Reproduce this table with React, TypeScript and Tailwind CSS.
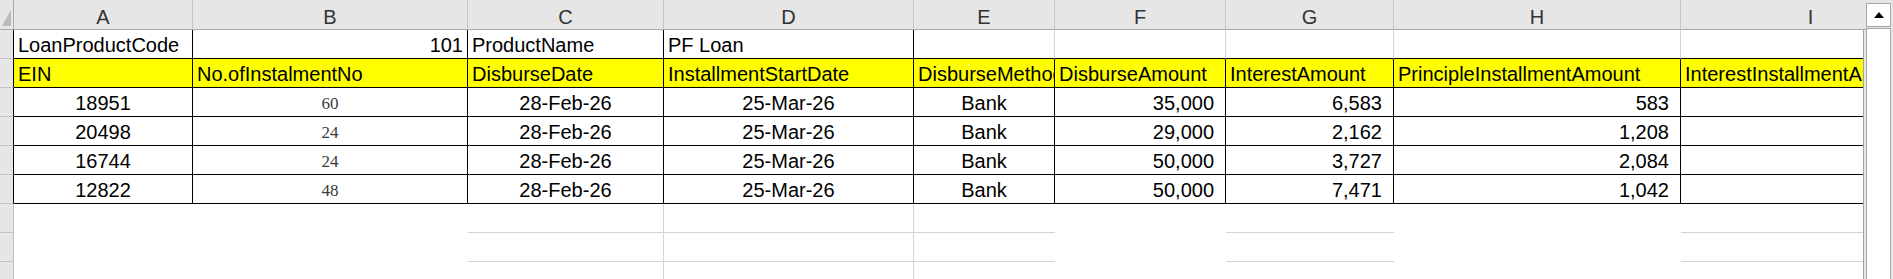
import React from "react";

type Align = "left" | "right" | "center";

interface CellDef {
  text?: string;
  align?: Align;
  serif?: boolean;
  pad?: "tight" | "num";
}

// column widths include the right border pixel
const widths = [
  "w-[179px]",
  "w-[275px]",
  "w-[196px]",
  "w-[250px]",
  "w-[141px]",
  "w-[171px]",
  "w-[168px]",
  "w-[287px]",
  "w-[260px]",
];

const letters = ["A", "B", "C", "D", "E", "F", "G", "H", "I"];

const headerRow: CellDef[] = [
  { text: "EIN" },
  { text: "No.ofInstalmentNo" },
  { text: "DisburseDate" },
  { text: "InstallmentStartDate" },
  { text: "DisburseMethod" },
  { text: "DisburseAmount" },
  { text: "InterestAmount" },
  { text: "PrincipleInstallmentAmount" },
  { text: "InterestInstallmentAmount" },
];

const loans = [
  ["18951", "60", "35,000", "6,583", "583"],
  ["20498", "24", "29,000", "2,162", "1,208"],
  ["16744", "24", "50,000", "3,727", "2,084"],
  ["12822", "48", "50,000", "7,471", "1,042"],
];

const dataRows: CellDef[][] = loans.map(([ein, n, amt, interest, principle]) => [
  { text: ein, align: "center" },
  { text: n, align: "center", serif: true },
  { text: "28-Feb-26", align: "center" },
  { text: "25-Mar-26", align: "center" },
  { text: "Bank", align: "center" },
  { text: amt, align: "right", pad: "num" },
  { text: interest, align: "right", pad: "num" },
  { text: principle, align: "right", pad: "num" },
  {},
]);

const alignClass: Record<Align, string> = {
  left: "justify-start",
  right: "justify-end",
  center: "justify-center",
};

function Cell({ w, border, def, bg = "" }: { w: string; border: string; def: CellDef; bg?: string }) {
  const align = def.align ?? "left";
  const pad = def.pad === "num" ? "pr-[11px] pl-[4px]" : "px-[4px]";
  return (
    <div className={`${w} ${border} ${bg} shrink-0 h-full flex items-end pb-[1px] overflow-hidden whitespace-nowrap ${alignClass[align]} ${pad}`}>
      {def.text && (
        <span
          className={
            def.serif
              ? "font-['Liberation_Serif',serif] text-[17px] leading-[23px] text-[#3a3a3a]"
              : "text-[20px] leading-[23px] text-black"
          }
        >
          {def.text}
        </span>
      )}
    </div>
  );
}

function RowHead({ edge }: { edge: "black" | "grid" }) {
  return (
    <div
      className={
        edge === "black"
          ? "w-[14px] shrink-0 h-full bg-[#e6e6e6] border-r border-b border-r-black border-b-[#c4c4c4]"
          : "w-[14px] shrink-0 h-full bg-[#e6e6e6] border-r border-b border-r-[#bdbdbd] border-b-[#c4c4c4]"
      }
    />
  );
}

const firstRow: CellDef[] = [
  { text: "LoanProductCode" },
  { text: "101", align: "right" },
  { text: "ProductName" },
  { text: "PF Loan" },
  {},
  {},
  {},
  {},
  {},
];

// gridlines under the data block: white-filled columns hide them
const emptyBorders = [
  "",
  "",
  "border-r border-b border-[#d4d4d4]",
  "border-r border-b border-[#d4d4d4]",
  "border-b border-[#d4d4d4]",
  "",
  "border-b border-[#d4d4d4]",
  "",
  "border-b border-[#d4d4d4]",
];

export default function App() {
  return (
    <div className="w-[1893px] h-[279px] overflow-hidden flex bg-[#e6e6e6] font-['Liberation_Sans',Arial,sans-serif]">
      <div className="w-[1866px] shrink-0 flex flex-col">
        {/* column letters */}
        <div className="flex h-[30px] shrink-0 overflow-hidden">
          <div className="w-[14px] shrink-0 h-full border-r border-b border-[#ababab] bg-[#e6e6e6]">
            <svg width="13" height="29" viewBox="0 0 13 29">
              <polygon points="11,10 11,26 2,26" fill="#bababa" />
            </svg>
          </div>
          {letters.map((l, i) => (
            <div
              key={l}
              className={`${widths[i]} shrink-0 h-full flex items-end justify-center border-r border-b border-r-[#c6c6c6] border-b-[#ababab] text-[20px] leading-[23px] text-[#333]`}
            >
              {l}
            </div>
          ))}
        </div>

        {/* sheet body */}
        <div className="w-[1864px] flex-1 border-r border-[#a3a3a3] bg-white overflow-hidden">
          <div className="flex h-[29px]">
            <RowHead edge="black" />
            {firstRow.map((c, i) => (
              <Cell
                key={i}
                w={widths[i]}
                def={c}
                border={i < 4 ? "border-r border-b border-black" : "border-r border-b border-r-[#d4d4d4] border-b-black"}
              />
            ))}
          </div>
          <div className="flex h-[29px]">
            <RowHead edge="black" />
            {headerRow.map((c, i) => (
              <Cell key={i} w={widths[i]} def={c} bg="bg-[#ffff00]" border="border-r border-b border-black" />
            ))}
          </div>
          {dataRows.map((row, r) => (
            <div key={r} className="flex h-[29px]">
              <RowHead edge="black" />
              {row.map((c, i) => (
                <Cell key={i} w={widths[i]} def={c} border="border-r border-b border-black" />
              ))}
            </div>
          ))}
          {[0, 1, 2].map((r) => (
            <div key={r} className="flex h-[29px]">
              <RowHead edge="grid" />
              {widths.map((w, i) => (
                <Cell key={i} w={w} def={{}} border={emptyBorders[i]} />
              ))}
            </div>
          ))}
        </div>
      </div>

      {/* vertical scrollbar */}
      <div className="w-[25px] shrink-0 flex flex-col pt-[3px]">
        <div className="h-[24px] shrink-0 border border-[#a6a6a6] bg-white flex items-center justify-center">
          <svg width="10" height="6" viewBox="0 0 10 6">
            <polygon points="5,0 10,6 0,6" fill="#000" />
          </svg>
        </div>
        <div className="flex-1 mt-[1px] border-x border-t border-[#a6a6a6] bg-white" />
      </div>
    </div>
  );
}
